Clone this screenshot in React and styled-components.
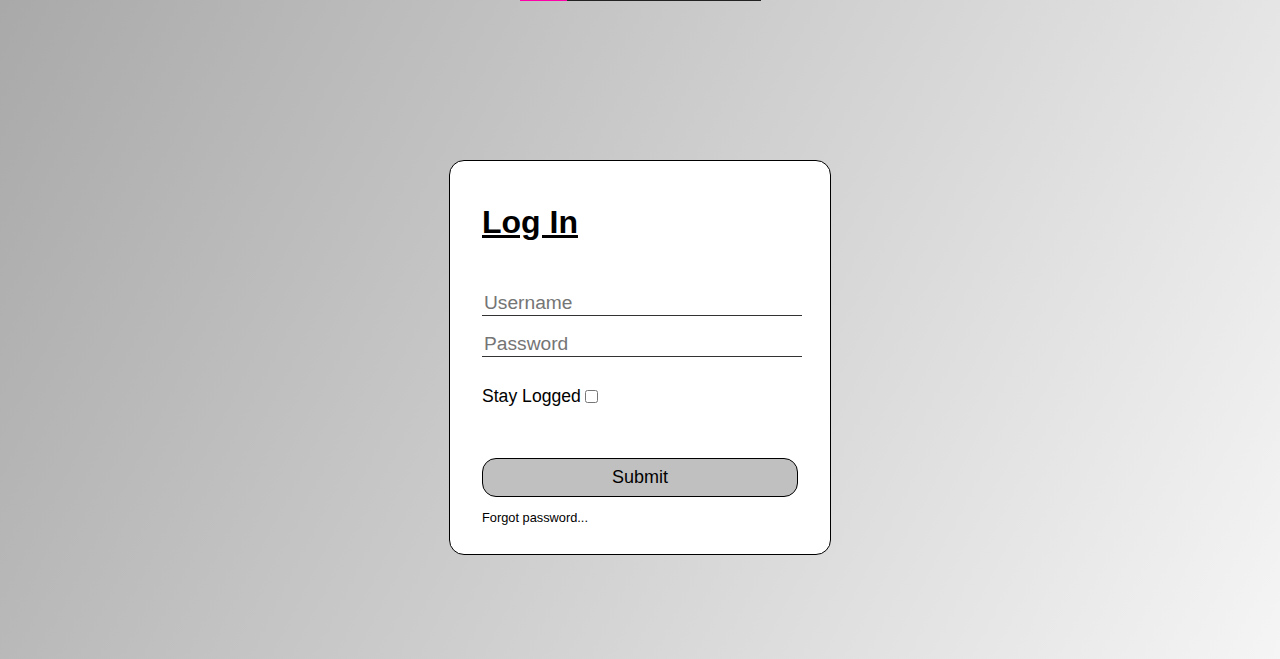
import React from 'react';
import styled, { createGlobalStyle } from 'styled-components';

const GlobalStyle = createGlobalStyle`
  html, body {
    margin: 0;
    padding: 0;
  }
  body {
    font-family: 'Liberation Sans', Arial, sans-serif;
  }
`;

const Page = styled.div`
  min-height: 100vh;
  display: flex;
  flex-direction: column;
  align-items: center;
  background: linear-gradient(117deg, darkgray, whitesmoke);
`;

const Progress = styled.div`
  width: 241px;
  height: 1px;
  background: #222;
  display: flex;
`;

const ProgressFill = styled.div`
  height: 100%;
  background: #ff00aa;
`;

const Card = styled.form`
  box-sizing: border-box;
  width: 382px;
  margin-top: 159px;
  padding: 43px 32px 29px;
  background: #fff;
  border: 1px solid #000;
  border-radius: 15px;
  display: flex;
  flex-direction: column;
  align-items: flex-start;
`;

const Title = styled.h1`
  margin: 0 0 50px;
  font-size: 32px;
  line-height: 37px;
  font-weight: bold;
  text-decoration: underline;
  color: #000;
`;

const Field = styled.input`
  box-sizing: border-box;
  width: 320px;
  height: 25px;
  margin: 0 0 ${p => p.$gap}px;
  padding: 1px 2px;
  border: none;
  border-bottom: 1px solid #333;
  outline: none;
  background: transparent;
  font-family: inherit;
  font-size: 19.2px;
  color: #000;

  &::placeholder {
    color: #757575;
  }
`;

const CheckRow = styled.label`
  display: flex;
  align-items: center;
  height: 21px;
  margin-bottom: 51px;
  font-size: 17.6px;
  color: #000;
`;

const Check = styled.input`
  width: 13px;
  height: 13px;
  margin: -1px 0 0 4px;
`;

const SubmitButton = styled.button`
  box-sizing: border-box;
  width: 316px;
  height: 39px;
  background: #c0c0c0;
  border: 1px solid #000;
  border-radius: 14px;
  font-family: inherit;
  font-size: 18px;
  color: #000;
  cursor: pointer;
`;

const Forgot = styled.a`
  margin-top: 14px;
  font-size: 12.8px;
  line-height: 14px;
  color: #000;
  text-decoration: none;
  cursor: pointer;
`;

export default function App() {
  return (
    <>
      <GlobalStyle />
      <Page>
        <Progress>
          <ProgressFill style={{ width: '47px' }} />
        </Progress>
        <Card onSubmit={e => e.preventDefault()}>
          <Title>Log In</Title>
          <Field type="text" placeholder="Username" $gap={16} />
          <Field type="password" placeholder="Password" $gap={29} />
          <CheckRow>
            Stay Logged
            <Check type="checkbox" />
          </CheckRow>
          <SubmitButton type="submit">Submit</SubmitButton>
          <Forgot>Forgot password...</Forgot>
        </Card>
      </Page>
    </>
  );
}
